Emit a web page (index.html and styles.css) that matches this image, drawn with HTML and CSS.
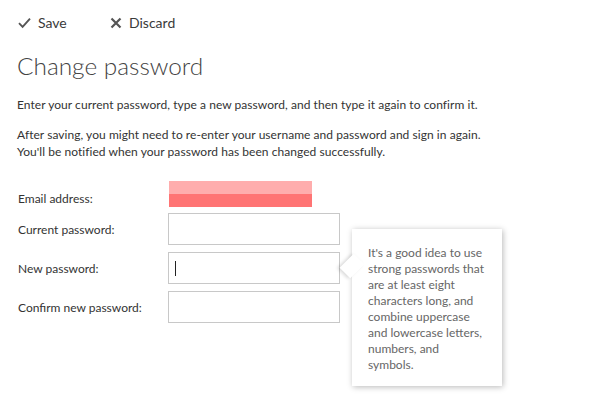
FILE: index.html
```html
<!DOCTYPE html>
<html>
<head>
<meta charset="utf-8">
<link rel="stylesheet" href="styles.css">
</head>
<body>
<div class="page">
  <div class="toolbar">
    <span class="tool">
      <svg class="ico" width="13" height="13" viewBox="0 0 13 13"><path d="M1 7.2 L4.6 10.8 L12 2.6" fill="none" stroke="#555" stroke-width="1.9"/></svg>
      <span>Save</span>
    </span>
    <span class="tool">
      <svg class="ico" width="12" height="12" viewBox="0 0 12 12"><path d="M1.5 1.5 L10.5 10.5 M10.5 1.5 L1.5 10.5" fill="none" stroke="#555" stroke-width="2.2"/></svg>
      <span>Discard</span>
    </span>
  </div>
  <h1 class="title">Change password</h1>
  <p class="intro">Enter your current password, type a new password, and then type it again to confirm it.</p>
  <p class="intro">After saving, you might need to re-enter your username and password and sign in again.<br>You'll be notified when your password has been changed successfully.</p>
  <div class="form">
    <div class="row email-row">
      <label class="lbl">Email address:</label>
      <div class="redact"><div class="r-top"></div><div class="r-bot"></div></div>
    </div>
    <div class="row">
      <label class="lbl">Current password:</label>
      <div class="field"></div>
    </div>
    <div class="row">
      <label class="lbl">New password:</label>
      <div class="field"><span class="caret"></span></div>
      <div class="tip">
        <span class="arrow"></span>
        It's a good idea to use strong passwords that are at least eight characters long, and combine uppercase and lowercase letters, numbers, and symbols.
      </div>
    </div>
    <div class="row">
      <label class="lbl">Confirm new password:</label>
      <div class="field"></div>
    </div>
  </div>
</div>
</body>
</html>
```
FILE: styles.css
```css
html, body { margin: 0; padding: 0; background: #fff; }
body { font-family: Lato, "Liberation Sans", sans-serif; color: #333; }
.page { padding: 13px 17px 0 17px; min-height: 404px; box-sizing: border-box; }
.toolbar { display: flex; align-items: center; height: 19px; font-size: 14px; color: #3a3a3a; }
.tool { display: inline-flex; align-items: center; gap: 7px; }
.tool:first-child { margin-left: 1px; width: 92px; }
.ico { display: block; }
.title { font-weight: 300; font-size: 24.4px; color: #444; margin: 18px 0 0 0; line-height: 32px; }
.intro { font-size: 12px; line-height: 17px; margin: 14px 0 0 0; color: #333; letter-spacing: 0.05px; }
.intro + .intro { margin-top: 13px; }
.form { margin-top: 21px; }
.row { position: relative; display: flex; align-items: center; margin-bottom: 7px; }
.lbl { width: 150px; font-size: 12px; color: #333; padding-left: 1px; }
.email-row { height: 26px; margin-bottom: 6px; }
.email-row .lbl { padding-top: 8px; }
.redact { width: 143px; height: 26px; display: flex; flex-direction: column; margin-left: 1px; }
.r-top { flex: 1; background: #ffadad; }
.r-bot { flex: 1; background: #ff7474; }
.field { width: 170px; height: 30px; border: 1px solid #c8c8c8; background: #fff; position: relative; }
.caret { position: absolute; left: 6px; top: 8px; width: 1px; height: 15px; background: #222; }
.tip { position: absolute; left: 335px; top: -23px; width: 118px; padding: 16px 16px 13px 16px; background: #fff; font-size: 12px; line-height: 16px; color: #666; box-shadow: 1px 1px 6px rgba(0,0,0,0.28); z-index: 2; }
.arrow { position: absolute; left: -10px; top: 27px; width: 20px; height: 20px; background: #fff; transform: rotate(45deg) scaleX(0.75); box-shadow: -2px 2px 4px rgba(0,0,0,0.15); }
```
